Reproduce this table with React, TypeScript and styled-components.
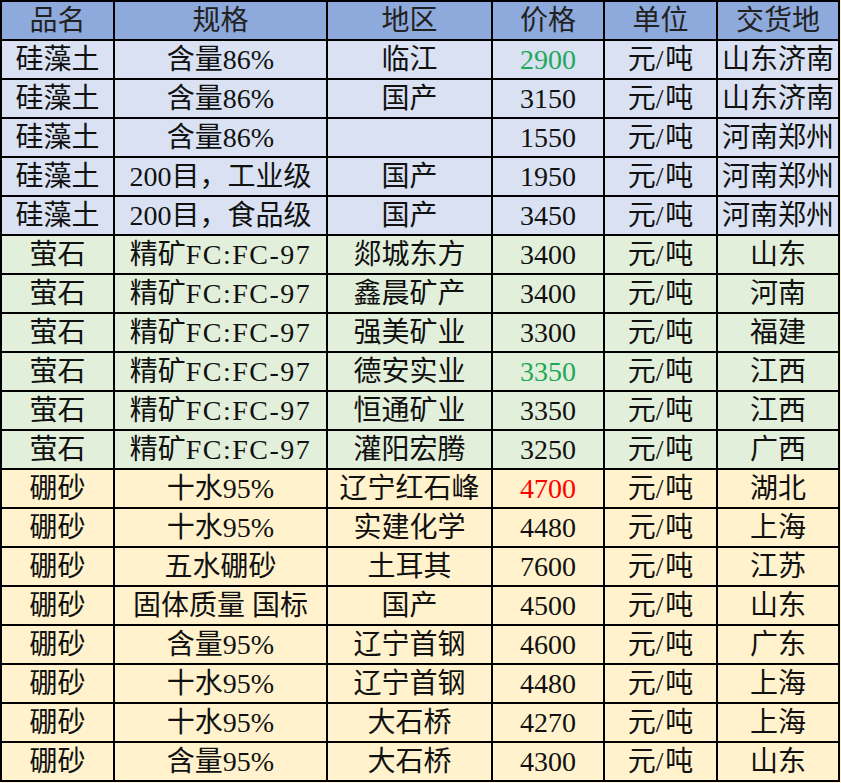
import { createGlobalStyle, styled } from "styled-components";

const GlobalStyle = createGlobalStyle`
  body {
    margin: 0;
    background-color: #fdf2d3;
  }
`;

type Tone = "header" | "blue" | "green" | "cream";

const tones: Record<Tone, string> = {
  header: "#8EA9DB",
  blue: "#D9E1F2",
  green: "#E2EFDA",
  cream: "#FFF2CC",
};

const Sheet = styled.table`
  width: 838px;
  table-layout: fixed;
  border-collapse: collapse;
  font-family: "Liberation Serif", "Noto Sans CJK SC", serif;
  font-size: 28px;
  color: #111;
`;

const Row = styled.tr<{ $tone: Tone }>`
  height: 39px;
  background-color: ${props => tones[props.$tone]};
`;

const Cell = styled.td<{ $color?: string }>`
  border: 2px solid #000;
  padding: 0;
  text-align: center;
  vertical-align: middle;
  white-space: nowrap;
  overflow: hidden;
  line-height: 35px;
  color: ${props => props.$color || "inherit"};
`;

const HeadCell = styled(Cell).attrs({ as: "th" })`
  font-weight: normal;
  color: #222;
`;

// latin runs in the sheet font are a touch wider than Liberation Serif
const Latin = styled.span`
  letter-spacing: 1.5px;
`;

const widths = [113, 213, 165, 112, 113, 122];

const heads = ["品名", "规格", "地区", "价格", "单位", "交货地"];

type Item = {
  name: string;
  spec: string;
  area: string;
  price: string;
  place: string;
  tone: Tone;
  priceColor?: string;
};

const green = "#1FA85A";
const red = "#FF0000";

const items: Item[] = [
  { name: "硅藻土", spec: "含量86%", area: "临江", price: "2900", place: "山东济南", tone: "blue", priceColor: green },
  { name: "硅藻土", spec: "含量86%", area: "国产", price: "3150", place: "山东济南", tone: "blue" },
  { name: "硅藻土", spec: "含量86%", area: "", price: "1550", place: "河南郑州", tone: "blue" },
  { name: "硅藻土", spec: "200目，工业级", area: "国产", price: "1950", place: "河南郑州", tone: "blue" },
  { name: "硅藻土", spec: "200目，食品级", area: "国产", price: "3450", place: "河南郑州", tone: "blue" },
  { name: "萤石", spec: "精矿FC:FC-97", area: "郯城东方", price: "3400", place: "山东", tone: "green" },
  { name: "萤石", spec: "精矿FC:FC-97", area: "鑫晨矿产", price: "3400", place: "河南", tone: "green" },
  { name: "萤石", spec: "精矿FC:FC-97", area: "强美矿业", price: "3300", place: "福建", tone: "green" },
  { name: "萤石", spec: "精矿FC:FC-97", area: "德安实业", price: "3350", place: "江西", tone: "green", priceColor: green },
  { name: "萤石", spec: "精矿FC:FC-97", area: "恒通矿业", price: "3350", place: "江西", tone: "green" },
  { name: "萤石", spec: "精矿FC:FC-97", area: "灌阳宏腾", price: "3250", place: "广西", tone: "green" },
  { name: "硼砂", spec: "十水95%", area: "辽宁红石峰", price: "4700", place: "湖北", tone: "cream", priceColor: red },
  { name: "硼砂", spec: "十水95%", area: "实建化学", price: "4480", place: "上海", tone: "cream" },
  { name: "硼砂", spec: "五水硼砂", area: "土耳其", price: "7600", place: "江苏", tone: "cream" },
  { name: "硼砂", spec: "固体质量 国标", area: "国产", price: "4500", place: "山东", tone: "cream" },
  { name: "硼砂", spec: "含量95%", area: "辽宁首钢", price: "4600", place: "广东", tone: "cream" },
  { name: "硼砂", spec: "十水95%", area: "辽宁首钢", price: "4480", place: "上海", tone: "cream" },
  { name: "硼砂", spec: "十水95%", area: "大石桥", price: "4270", place: "上海", tone: "cream" },
  { name: "硼砂", spec: "含量95%", area: "大石桥", price: "4300", place: "山东", tone: "cream" },
];

function renderSpec(spec: string) {
  return spec.split(/([A-Za-z:\-0-9%]+)/).map((part, i) =>
    /^[A-Za-z:\-]/.test(part) ? <Latin key={i}>{part}</Latin> : part
  );
}

function App() {
  return (
    <>
      <GlobalStyle />
      <Sheet>
        <colgroup>
          {widths.map((w, i) => (
            <col key={i} style={{ width: w }} />
          ))}
        </colgroup>
        <thead>
          <Row $tone="header">
            {heads.map(h => (
              <HeadCell key={h}>{h}</HeadCell>
            ))}
          </Row>
        </thead>
        <tbody>
          {items.map((item, i) => (
            <Row key={i} $tone={item.tone}>
              <Cell>{item.name}</Cell>
              <Cell>{renderSpec(item.spec)}</Cell>
              <Cell>{item.area}</Cell>
              <Cell $color={item.priceColor}>{item.price}</Cell>
              <Cell>
                元<Latin>/</Latin>吨
              </Cell>
              <Cell>{item.place}</Cell>
            </Row>
          ))}
        </tbody>
      </Sheet>
    </>
  );
}

export default App;
